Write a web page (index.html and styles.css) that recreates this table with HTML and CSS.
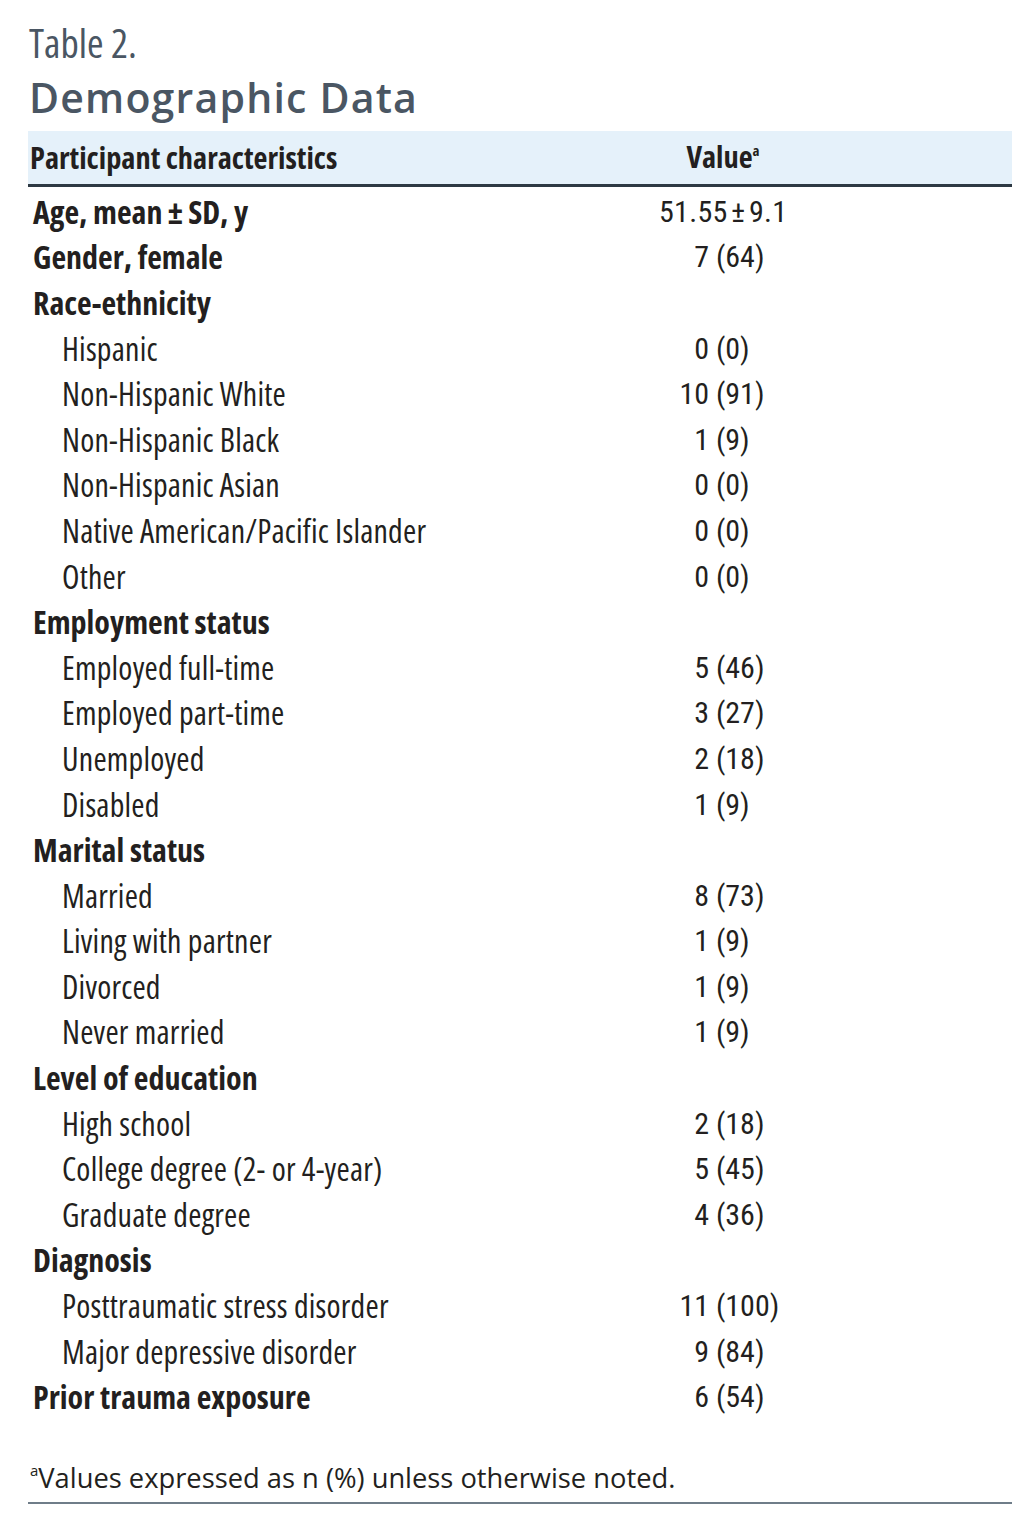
FILE: index.html
```html
<!DOCTYPE html>
<html lang="en">
<head>
<meta charset="utf-8">
<title>Table 2. Demographic Data</title>
<link rel="stylesheet" href="styles.css">
</head>
<body>
<div class="page">
  <div class="caption">Table 2.</div>
  <h1 class="title">Demographic Data</h1>
  <div class="table">
    <div class="row head">
      <div class="lab">Participant characteristics</div>
      <div class="val">Value<sup>a</sup></div>
    </div>
    <div class="row"><div class="lab main">Age, mean&#8201;±&#8201;SD, y</div><div class="val"><span class="mean">51.55&#8202;±&#8202;9.1</span></div></div>
    <div class="row"><div class="lab main">Gender, female</div><div class="val"><span class="n">7</span> <span>(64)</span></div></div>
    <div class="row"><div class="lab main">Race-ethnicity</div><div class="val"></div></div>
    <div class="row"><div class="lab sub">Hispanic</div><div class="val"><span class="n">0</span> <span>(0)</span></div></div>
    <div class="row"><div class="lab sub">Non-Hispanic White</div><div class="val"><span class="n">10</span> <span>(91)</span></div></div>
    <div class="row"><div class="lab sub">Non-Hispanic Black</div><div class="val"><span class="n">1</span> <span>(9)</span></div></div>
    <div class="row"><div class="lab sub">Non-Hispanic Asian</div><div class="val"><span class="n">0</span> <span>(0)</span></div></div>
    <div class="row"><div class="lab sub">Native American/Pacific Islander</div><div class="val"><span class="n">0</span> <span>(0)</span></div></div>
    <div class="row"><div class="lab sub">Other</div><div class="val"><span class="n">0</span> <span>(0)</span></div></div>
    <div class="row"><div class="lab main">Employment status</div><div class="val"></div></div>
    <div class="row"><div class="lab sub">Employed full-time</div><div class="val"><span class="n">5</span> <span>(46)</span></div></div>
    <div class="row"><div class="lab sub">Employed part-time</div><div class="val"><span class="n">3</span> <span>(27)</span></div></div>
    <div class="row"><div class="lab sub">Unemployed</div><div class="val"><span class="n">2</span> <span>(18)</span></div></div>
    <div class="row"><div class="lab sub">Disabled</div><div class="val"><span class="n">1</span> <span>(9)</span></div></div>
    <div class="row"><div class="lab main">Marital status</div><div class="val"></div></div>
    <div class="row"><div class="lab sub">Married</div><div class="val"><span class="n">8</span> <span>(73)</span></div></div>
    <div class="row"><div class="lab sub">Living with partner</div><div class="val"><span class="n">1</span> <span>(9)</span></div></div>
    <div class="row"><div class="lab sub">Divorced</div><div class="val"><span class="n">1</span> <span>(9)</span></div></div>
    <div class="row"><div class="lab sub">Never married</div><div class="val"><span class="n">1</span> <span>(9)</span></div></div>
    <div class="row"><div class="lab main">Level of education</div><div class="val"></div></div>
    <div class="row"><div class="lab sub">High school</div><div class="val"><span class="n">2</span> <span>(18)</span></div></div>
    <div class="row"><div class="lab sub">College degree (2- or 4-year)</div><div class="val"><span class="n">5</span> <span>(45)</span></div></div>
    <div class="row"><div class="lab sub">Graduate degree</div><div class="val"><span class="n">4</span> <span>(36)</span></div></div>
    <div class="row"><div class="lab main">Diagnosis</div><div class="val"></div></div>
    <div class="row"><div class="lab sub">Posttraumatic stress disorder</div><div class="val"><span class="n">11</span> <span>(100)</span></div></div>
    <div class="row"><div class="lab sub">Major depressive disorder</div><div class="val"><span class="n">9</span> <span>(84)</span></div></div>
    <div class="row"><div class="lab main">Prior trauma exposure</div><div class="val"><span class="n">6</span> <span>(54)</span></div></div>
  </div>
  <p class="note"><sup>a</sup>Values expressed as n (%) unless otherwise noted.</p>
</div>
</body>
</html>
```
FILE: styles.css
```css
html, body {
  margin: 0;
  padding: 0;
  background: #ffffff;
}

.page {
  width: 984px;
  margin-left: 28px;
  padding-top: 20px;
  color: #231f20;
}

.caption {
  font-family: "Open Sans", sans-serif;
  font-stretch: 75%;
  font-weight: 400;
  font-size: 40px;
  line-height: 45px;
  color: #4a5663;
  padding-left: 1px;
}

.title {
  margin: 4px 0 0 0;
  font-family: "Open Sans", sans-serif;
  font-weight: 600;
  font-size: 41px;
  line-height: 56px;
  letter-spacing: 1.2px;
  color: #4a5663;
  padding-left: 1px;
}

.table {
  margin-top: 6px;
}

.row {
  display: grid;
  grid-template-columns: 595px 200px 1fr;
  height: 45.6px;
  align-items: center;
}

.row.head {
  height: 53px;
  background: #e5f1fa;
  border-bottom: 3px solid #2d3943;
  margin-bottom: 2px;
}

.lab {
  font-family: "Open Sans", sans-serif;
  font-stretch: 75%;
  font-size: 32px;
  line-height: 40px;
  white-space: nowrap;
  color: #231f20;
}

.head .lab {
  font-weight: 700;
  font-size: 30.4px;
  padding-left: 2px;
}

.lab.main {
  font-weight: 700;
  padding-left: 5px;
}

.lab.sub {
  font-weight: 400;
  letter-spacing: 0.2px;
  padding-left: 34px;
}

.val {
  font-family: "Roboto", sans-serif;
  font-stretch: 80%;
  font-size: 30px;
  line-height: 40px;
  text-align: left;
  padding-left: 36px;
  white-space: nowrap;
  color: #231f20;
}

.val .n {
  display: inline-block;
  width: 50px;
  text-align: right;
}

.val .mean {
  letter-spacing: 0.3px;
}

.head .val {
  font-family: "Open Sans", sans-serif;
  font-stretch: 75%;
  font-weight: 700;
  font-size: 30.4px;
  text-align: center;
  padding-left: 0;
  padding-top: 3px;
}

.head .val sup {
  font-size: 15px;
  vertical-align: 0;
  position: relative;
  top: -12px;
}

.note {
  margin: 40px 0 0 0;
  padding: 0 0 2px 2px;
  font-family: "Open Sans", sans-serif;
  font-size: 27.3px;
  line-height: 36px;
  color: #231f20;
  border-bottom: 2px solid #6f7d89;
}

.note sup {
  font-size: 15px;
  vertical-align: 0;
  position: relative;
  top: -12px;
}
```
